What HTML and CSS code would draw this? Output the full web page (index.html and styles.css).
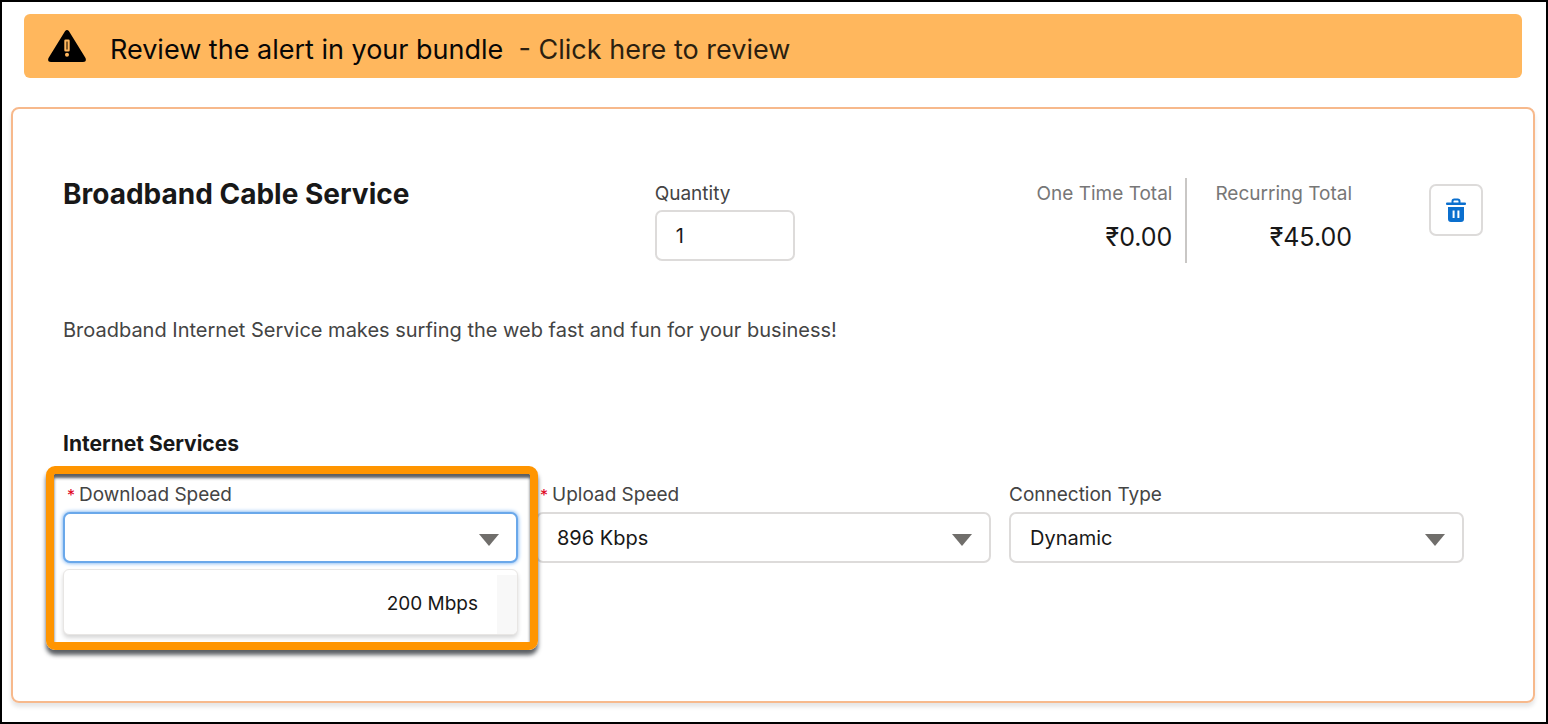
FILE: index.html
```html
<!DOCTYPE html>
<html lang="en">
<head>
<meta charset="utf-8">
<title>Configure Bundle</title>
<link rel="stylesheet" href="styles.css">
</head>
<body>
<main class="page">
  <div class="alert" role="alert">
    <svg class="alert-icon" viewBox="0 0 38 32" aria-hidden="true">
      <path fill="#000" fill-rule="evenodd" d="M17 1.200q2-2.400 4 0L37.500 28q1.400 4-2.500 4H3Q-.900 32 .500 28ZM17.500 9.500q-1.200 0-1.200 1.200v9.600q0 1.200 1.200 1.200h3q1.200 0 1.200-1.200v-9.600q0-1.200-1.200-1.200ZM19 22.800a2 2 0 1 0 0 4 2 2 0 0 0 0-4Z"/>
      <path stroke="#5a3d18" stroke-width="1.500" d="M19 11.500v8"/>
    </svg>
    <p class="alert-text">Review the alert in your bundle <a class="alert-link" href="#product">&nbsp;- Click here to review</a></p>
  </div>

  <section class="card" id="product">
    <header class="card-header">
      <h1 class="title">Broadband Cable Service</h1>
      <div class="summary">
        <div class="quantity">
          <label class="label quantity-label" for="quantity">Quantity</label>
          <input class="control quantity-input" id="quantity" type="text" inputmode="numeric" value="1">
        </div>
        <dl class="totals">
          <div class="total">
            <dt class="total-name">One Time Total</dt>
            <dd class="total-value">₹0.00</dd>
          </div>
          <div class="total">
            <dt class="total-name">Recurring Total</dt>
            <dd class="total-value">₹45.00</dd>
          </div>
        </dl>
        <button class="delete" type="button" aria-label="Delete">
          <svg class="delete-icon" viewBox="0 0 22 24" aria-hidden="true">
            <path fill="none" stroke="#0b6fce" stroke-width="2" d="M7.500 5V3.200q0-1.700 1.700-1.700h3.600q1.700 0 1.700 1.700V5"/>
            <rect x="1" y="4.500" width="20" height="2.600" rx="1" fill="#0b6fce"/>
            <path fill="#0b6fce" fill-rule="evenodd" d="M3 9h16v12q0 3-3 3H6q-3 0-3-3ZM7.600 12.500v7.500h2v-7.500ZM12.400 12.500v7.500h2v-7.500Z"/>
          </svg>
        </button>
      </div>
    </header>

    <p class="description">Broadband Internet Service makes surfing the web fast and fun for your business!</p>

    <h2 class="section-title">Internet Services</h2>
    <div class="fields">
      <div class="field">
        <label class="label required" for="download">Download Speed</label>
        <div class="select-wrap">
          <select class="control select select-active" id="download"><option></option><option>200 Mbps</option></select>
        </div>
        <ul class="menu">
          <li class="menu-item">200 Mbps</li>
        </ul>
        <div class="highlight"></div>
      </div>
      <div class="field">
        <label class="label required" for="upload">Upload Speed</label>
        <div class="select-wrap">
          <select class="control select" id="upload"><option>896 Kbps</option></select>
        </div>
      </div>
      <div class="field">
        <label class="label" for="connection">Connection Type</label>
        <div class="select-wrap">
          <select class="control select" id="connection"><option>Dynamic</option></select>
        </div>
      </div>
    </div>
  </section>
</main>
</body>
</html>
```
FILE: styles.css
```css
* {
  box-sizing: border-box;
}

body,
h1,
h2,
p,
dl,
dd,
ul {
  margin: 0;
  padding: 0;
}

body {
  font-family: Inter, "Liberation Sans", sans-serif;
  font-size: 20px;
  line-height: 30px;
  color: #181818;
  background: #fff;
}

.page {
  min-height: 100vh;
  padding: 12px 11px 19px 9px;
  border: 2px solid #000;
}

.alert {
  display: flex;
  align-items: flex-start;
  gap: 24px;
  margin: 0 13px 29px;
  padding: 16px 24px 8px;
  border-radius: 6px;
  background: #ffb75d;
}

.alert-icon {
  width: 38px;
  height: 32px;
}

.alert-text {
  font-size: 27px;
  line-height: 40px;
  color: #080707;
}

.alert-link {
  color: #2b1f10;
  text-decoration: none;
}

.card {
  padding: 69px 50px 138px;
  border: 2px solid #f7b98c;
  border-radius: 8px;
  box-shadow: 0 4px 4px rgba(0, 0, 0, 0.1);
}

.card-header {
  display: grid;
  grid-template-columns: 5fr 7fr;
}

.title {
  font-size: 28px;
  line-height: 32px;
  font-weight: 700;
}

.summary {
  display: flex;
  align-items: flex-start;
}

.label {
  display: block;
  font-size: 19px;
  color: #444;
}

.quantity {
  width: 140px;
}

.quantity-label {
  line-height: 32px;
}

.control {
  display: block;
  width: 100%;
  height: 51px;
  padding: 0 19px;
  border: 2px solid #dddbda;
  border-radius: 7px;
  background: #fff;
  color: #181818;
  font: inherit;
  outline: none;
}

.totals {
  display: flex;
  margin-left: auto;
  text-align: right;
}

.total {
  height: 85px;
}

.total + .total {
  margin-left: 13px;
  padding-left: 28px;
  border-left: 2px solid #c9c7c5;
}

.total-name {
  font-size: 19px;
  line-height: 32px;
  color: #777;
}

.total-value {
  margin-top: 11px;
  font-size: 25px;
  line-height: 32px;
}

.delete {
  display: grid;
  place-items: center;
  width: 54px;
  height: 52px;
  margin: 6px 0 0 77px;
  padding: 0;
  border: 2px solid #dddbda;
  border-radius: 7px;
  background: #fff;
}

.delete-icon {
  width: 22px;
  height: 24px;
}

.description {
  margin-top: 52px;
  color: #444;
}

.section-title {
  margin-top: 84px;
  font-size: 21px;
  line-height: 30px;
  font-weight: 700;
}

.fields {
  display: grid;
  grid-template-columns: repeat(3, 1fr);
  gap: 18px;
  margin: 21px 19px 0 0;
}

.field {
  position: relative;
}

.required::before {
  content: "*";
  margin: 0 4px;
  font-size: 16px;
  color: #e0001b;
}

.select-wrap {
  position: relative;
  margin-top: 2px;
}

.select-wrap::after {
  content: "";
  position: absolute;
  top: 22px;
  right: 19px;
  border: solid transparent;
  border-width: 12px 10px 0;
  border-top-color: #706e6b;
  pointer-events: none;
}

.select {
  appearance: none;
}

.select-active {
  border-color: #6aa8ea;
  box-shadow: 0 0 4px #5aa0ee;
}

.menu {
  position: absolute;
  top: 89px;
  left: 0;
  width: 100%;
  padding-top: 5px;
  border: 1px solid #e8e6e4;
  border-radius: 6px;
  background: #fff;
  box-shadow: 0 3px 4px rgba(0, 0, 0, 0.16);
  list-style: none;
}

.menu-item {
  padding: 14px 19px 15px;
  border-right: 20px solid #f8f8f8;
  border-bottom-right-radius: 5px;
  font-size: 19px;
  text-align: right;
}

.highlight {
  position: absolute;
  inset: -14px -20px -87px -17px;
  border: 8px solid #ff9500;
  border-radius: 9px;
  box-shadow: 0 5px 4px rgba(50, 55, 60, 0.8), inset 0 4px 3px rgba(50, 55, 60, 0.8);
  pointer-events: none;
  z-index: 1;
}
```
